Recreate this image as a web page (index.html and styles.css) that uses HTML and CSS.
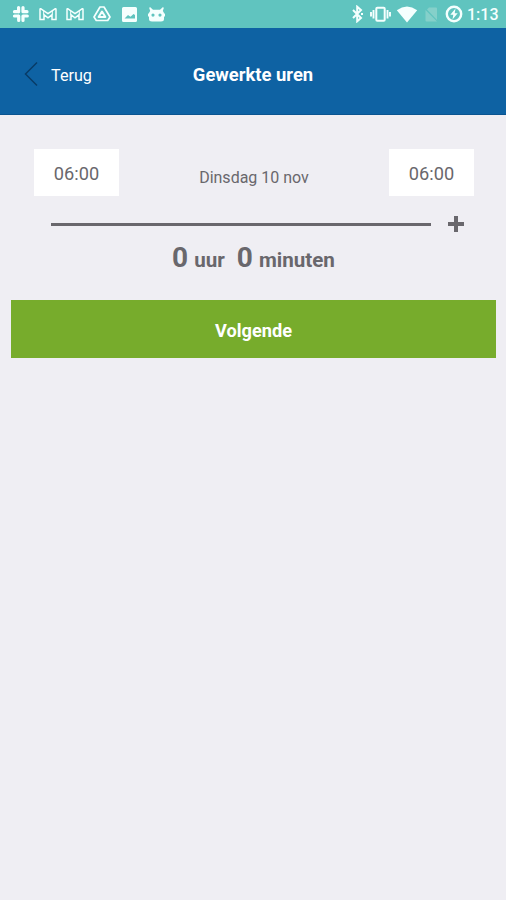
FILE: index.html
```html
<!DOCTYPE html>
<html lang="nl">
<head>
<meta charset="utf-8">
<title>Gewerkte uren</title>
<link rel="stylesheet" href="styles.css">
</head>
<body>
<div class="status">
  <div class="notifications">
    <svg width="18" height="18" viewBox="0 0 18 18"><g stroke="currentColor" stroke-width="3.2" stroke-linecap="round" fill="none"><path d="M6.600 2.500v4.300M2.500 6.700h4M11 2.500v4M11 6.700h4M2.500 11h4M6.700 11v4.500M11 11h4.300M11 11v4.500"/></g></svg>
    <svg width="18" height="18" viewBox="0 0 18 18"><path d="M1 14.500V4.200Q1 3.400 2 3.800L9 8.500l7-4.700q1-.4 1 .4v10.300h-4V9.800l-4 3-4-3v4.700z" fill="none" stroke="currentColor" stroke-width="1.500"/><path d="M4.700 5.800v4M13.300 5.800v4" stroke="currentColor"/></svg>
    <svg width="18" height="18" viewBox="0 0 18 18"><path d="M1 14.500V4.200Q1 3.400 2 3.800L9 8.500l7-4.700q1-.4 1 .4v10.300h-4V9.800l-4 3-4-3v4.700z" fill="none" stroke="currentColor" stroke-width="1.500"/><path d="M4.700 5.800v4M13.300 5.800v4" stroke="currentColor"/></svg>
    <svg width="18" height="18" viewBox="0 0 18 18"><g fill="none" stroke="currentColor" stroke-linejoin="round"><path d="M7 2h4l6 10-2.300 3.500H3.300L1 12z" stroke-width="1.700"/><path d="M9 6.500l3.400 5.500H5.600z" stroke-width="2"/></g></svg>
    <svg width="18" height="18" viewBox="0 0 18 18"><path fill="currentColor" fill-rule="evenodd" d="M3.500 2h12A1.500 1.500 0 0 1 17 3.500v12a1.500 1.500 0 0 1-1.500 1.500h-12A1.500 1.500 0 0 1 2 15.500v-12A1.500 1.500 0 0 1 3.500 2zM4.500 13.500H15V10l-1.500-1-3 2.700L8 10z"/></svg>
    <svg width="19" height="18" viewBox="0 0 19 18"><path fill="currentColor" fill-rule="evenodd" d="M3 2l3 2.700h7L16 2l.8 1-1 3q1.200 1 1.200 2.500h1v3h-1V14q0 2.500-3 2.500H5Q2 16.500 2 14v-2.500H1v-3h1Q2 7 3.200 6l-1-3zM6 8.500a1.600 1.600 0 1 0 0 3.200 1.600 1.600 0 0 0 0-3.200zm7 0a1.600 1.600 0 1 0 0 3.200 1.600 1.600 0 0 0 0-3.200z"/></svg>
  </div>
  <div class="system">
    <svg width="14" height="18" viewBox="0 0 14 18"><path d="M2 5l8 8-3.800 3.300V1.700L10 5l-8 8" fill="none" stroke="currentColor" stroke-width="2"/><path d="M10 8h2v2h-2z" fill="currentColor"/></svg>
    <svg class="vibrate" width="21" height="18" viewBox="0 0 21 18"><path d="M1 7v4.500M3.500 5v8.500M17.500 5v8.500M20 7v4.500" stroke="currentColor" stroke-width="1.900"/><rect x="6.300" y="2.800" width="8.400" height="12.900" rx="1" fill="none" stroke="currentColor" stroke-width="2"/></svg>
    <svg class="wifi" width="22" height="18" viewBox="0 0 22 18"><path d="M.8 5.200Q11-2.200 21.200 5.200L11 17.500z" fill="currentColor"/></svg>
    <svg class="sim" width="14" height="18" viewBox="0 0 14 18"><path d="M5 2.500h7q1 0 1 1V15L3 4.500zM1.500 5L13 16.500H2.500q-1 0-1-1z" fill="currentColor"/></svg>
    <svg class="power" width="18" height="18" viewBox="0 0 18 18"><circle cx="9" cy="9" r="7.200" fill="none" stroke="currentColor" stroke-width="2.400"/><path d="M10.500 3.500L5.300 9.700h3L7.500 14.500l5.200-6.200h-3z" fill="currentColor"/></svg>
    <span class="clock">1:13</span>
  </div>
</div>
<header class="header">
  <div class="back"><svg width="14" height="26" viewBox="0 0 14 26"><path d="M13 1.500L1.500 13 13 24.500" fill="none" stroke="currentColor" stroke-width="1.500"/></svg><span>Terug</span></div>
  <h1 class="title">Gewerkte uren</h1>
</header>
<main class="main">
  <div class="times">
    <div class="time">06:00</div>
    <div class="date">Dinsdag 10 nov</div>
    <div class="time">06:00</div>
  </div>
  <div class="slider">
    <div class="track"></div>
    <svg width="16" height="18" viewBox="0 0 16 18"><path d="M8 1v16M0 9h16" stroke="currentColor" stroke-width="4"/></svg>
  </div>
  <div class="total"><b>0</b><span>uur</span><b class="minutes">0</b><span>minuten</span></div>
  <div class="next">Volgende</div>
</main>
</body>
</html>
```
FILE: styles.css
```css
* { box-sizing: border-box; }
body {
  margin: 0;
  min-height: 900px;
  background: #efeef3;
  color: #69676c;
  font-family: Roboto, "Liberation Sans", sans-serif;
}
svg { display: block; flex: none; }
.status {
  display: flex;
  justify-content: space-between;
  height: 28px;
  padding: 5px 8px 0 12px;
  background: #60c4bf;
  color: #f5fffe;
}
.notifications { display: flex; gap: 9px; }
.system { display: flex; }
.vibrate { margin-left: 5px; }
.wifi { margin-left: 5px; }
.sim { margin-left: 6px; color: #85d0ca; }
.power { margin-left: 7px; }
.clock {
  width: 31px;
  margin-left: 4px;
  font-size: 16px;
  font-weight: 500;
  line-height: 19px;
  white-space: nowrap;
}
.header {
  display: grid;
  grid-template-columns: 1fr auto 1fr;
  align-items: center;
  height: 87px;
  padding: 8px 24px 0;
  background: #0e62a3;
  border-bottom: 1px solid #0a5490;
  color: #fff;
}
.back {
  display: flex;
  align-items: center;
  gap: 13px;
  font-size: 16.2px;
}
.back svg { margin-top: -2px; color: #083c67; }
.title { margin: 0; font-size: 18.4px; font-weight: 700; line-height: 22px; }
.main { padding: 34px 10px 0 11px; }
.times {
  display: flex;
  justify-content: space-between;
  height: 47px;
  padding: 0 22px 0 23px;
}
.time {
  width: 85px;
  height: 47px;
  background: #fff;
  font-size: 18.2px;
  line-height: 50px;
  text-align: center;
}
.date { font-size: 16px; line-height: 57px; }
.slider {
  display: flex;
  align-items: center;
  gap: 17px;
  height: 18px;
  margin: 19px 32px 0 40px;
}
.track { flex: 1; height: 3px; background: #69676c; }
.total {
  display: flex;
  align-items: baseline;
  justify-content: center;
  height: 67px;
  padding-top: 7px;
  font-size: 20.6px;
  font-weight: 700;
  line-height: 36px;
}
.total b { margin-right: 6px; font-size: 28px; font-weight: 700; }
.total .minutes { margin-left: 12px; }
.next {
  height: 58px;
  background: #77ac2c;
  color: #fff;
  font-size: 18.2px;
  font-weight: 700;
  line-height: 61px;
  text-align: center;
}
```
